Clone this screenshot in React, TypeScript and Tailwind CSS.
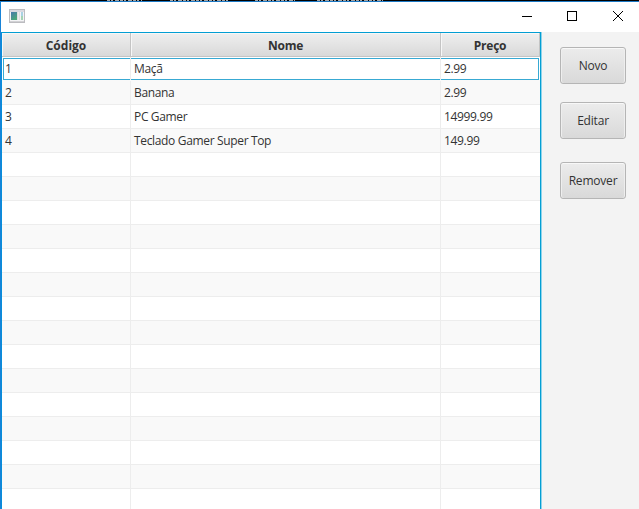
const products = [
  { code: '1', name: 'Maçã', price: '2.99' },
  { code: '2', name: 'Banana', price: '2.99' },
  { code: '3', name: 'PC Gamer', price: '14999.99' },
  { code: '4', name: 'Teclado Gamer Super Top', price: '149.99' },
];

const rows = Array.from({ length: 19 }, (_, i) => products[i] ?? { code: '', name: '', price: '' });

const columns = [
  { title: 'Código', field: 'code', width: 'w-[129px]', tracking: '' },
  { title: 'Nome', field: 'name', width: 'w-[310px]', tracking: 'tracking-[-0.3px]' },
  { title: 'Preço', field: 'price', width: 'w-[99px]', tracking: 'tracking-[-0.2px]' },
] as const;

function WindowIcon() {
  return (
    <svg width="16" height="14" viewBox="0 0 16 14" shapeRendering="crispEdges">
      <defs>
        <linearGradient id="screen" x1="0" y1="0" x2="0.6" y2="1">
          <stop offset="0" stopColor="#4779ad" />
          <stop offset="1" stopColor="#4ba878" />
        </linearGradient>
      </defs>
      <rect x="0.5" y="0.5" width="15" height="13" fill="#f4f4f6" stroke="#bcbcc0" />
      <rect x="1" y="1" width="14" height="2" fill="#d9d9e0" />
      <rect x="2" y="3" width="6" height="8" fill="url(#screen)" />
      <rect x="8" y="3" width="3" height="8" fill="#dededf" />
      <rect x="9" y="3" width="1" height="8" fill="#ececec" />
      <rect x="12" y="3" width="2" height="4" fill="#a9d2e4" />
      <rect x="12" y="7" width="2" height="4" fill="#a3d3b4" />
      <rect x="1" y="12" width="14" height="1" fill="#d2d2d5" />
    </svg>
  );
}

function TitleBar() {
  return (
    <header className="flex h-[30px] shrink-0 items-start bg-white">
      <div className="ml-[8px] mt-[7px]"><WindowIcon /></div>
      <svg className="ml-auto mr-[15px] mt-[8px]" width="102" height="12" viewBox="0 0 102 12" fill="none" stroke="#000">
        <path d="M0 6.5h10M45.5 1.5h9v9h-9z" shapeRendering="crispEdges" />
        <path d="M91 1l10 10M101 1L91 11" />
      </svg>
    </header>
  );
}

function SideButton({ label, className }: { label: string; className: string }) {
  return (
    <button
      className={`flex h-[37px] w-[66px] items-center justify-center rounded-[3px] border border-[#b5b5b5] bg-linear-to-b from-[#ececec] to-[#d9d9d9] pt-px tracking-[-0.2px] text-[#333] shadow-[inset_0_1px_0_#f8f8f8,inset_1px_0_0_#eee,inset_-1px_0_0_#eee] ${className}`}
    >
      {label}
    </button>
  );
}

export default function App() {
  return (
    <div className="flex h-[509px] w-[639px] flex-col overflow-hidden bg-[#f3f3f3] font-['Open_Sans','Noto_Sans',sans-serif] text-[12px] leading-[16px] text-[#333]">
      <div className="h-px shrink-0 bg-black">
        <svg className="block" width="639" height="1" stroke="#a5a5a5" strokeWidth="1">
          <path d="M107 .5H142M170 .5H230M255 .5H295M317 .5H383" strokeDasharray="3 1 2 2 4 1" />
        </svg>
      </div>
      <div className="flex min-h-0 flex-1 flex-col border-l border-t border-l-[#1883d7] border-t-[#1b78c4]">
        <TitleBar />
        <main className="flex min-h-0 flex-1">
          <section className="flex w-[540px] shrink-0 flex-col overflow-hidden border-x border-t border-l-[#078ddb] border-r-[#039ed3] border-t-[#039ed3] bg-white shadow-[1px_0_0_#8fd3ea]">
            <div className="flex h-[24px] shrink-0 border-b border-[#c4c4c4] bg-linear-to-b from-[#efefef] to-[#d9d9d9]">
              {columns.map((col) => (
                <div key={col.field} className={`flex shrink-0 items-center justify-center border-r border-[#c4c4c4] pt-[2px] font-bold shadow-[inset_1px_1px_0_#f7f7f7] ${col.width} ${col.tracking}`}>
                  {col.title}
                </div>
              ))}
            </div>
            {rows.map((row, i) => (
              <div key={i} className={`flex h-[24px] shrink-0 border-b ${i === 0 ? 'border-[#f9f9f9]' : 'border-[#ededed]'} ${i % 2 ? 'bg-[#f9f9f9]' : 'bg-white'}`}>
                {columns.map((col, c) => (
                  <div key={col.field} className={`flex shrink-0 border-r border-[#ededed] tracking-[-0.34px] last:border-r-0 ${col.width}`}>
                    <div className={`flex flex-1 items-center ${i === 0 ? 'mt-px border-y border-[#38a9d3]' : 'pt-px'} ${i === 0 && c === 0 ? 'ml-px border-l pl-px' : 'pl-[3px]'} ${i === 0 && c === 2 ? 'mr-px border-r' : ''}`}>
                      {row[col.field]}
                    </div>
                  </div>
                ))}
              </div>
            ))}
          </section>
          <aside className="flex flex-1 flex-col items-start pl-[19px] pt-[15px]">
            <SideButton label="Novo" className="" />
            <SideButton label="Editar" className="mt-[18px]" />
            <SideButton label="Remover" className="mt-[23px]" />
          </aside>
        </main>
      </div>
    </div>
  );
}
